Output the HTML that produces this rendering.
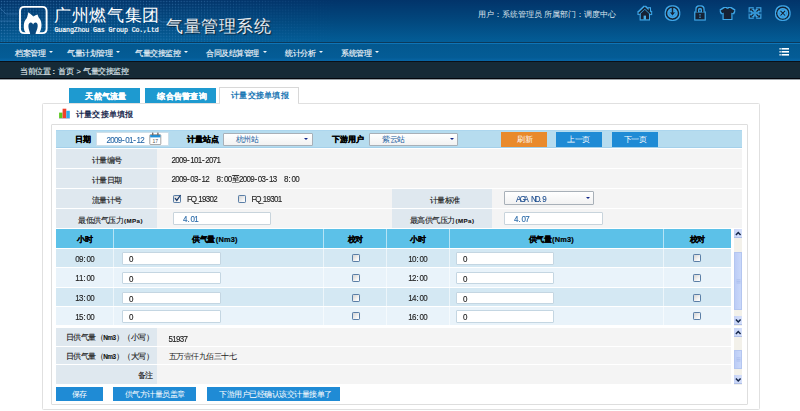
<!DOCTYPE html>
<html><head><meta charset="utf-8">
<style>
*{margin:0;padding:0;box-sizing:border-box}
html,body{width:800px;height:411px;overflow:hidden;background:#fff;font-family:"Liberation Sans",sans-serif}
.a{position:absolute}
#hdr{left:0;top:0;width:800px;height:42px;background:linear-gradient(#02346a,#02487e 50%,#035d97)}
#l1{left:0;top:42px;width:800px;height:1px;background:#0b3a5c}
#l2{left:0;top:43px;width:800px;height:1px;background:#0f74b6}
#nav{left:0;top:44px;width:800px;height:17px;background:linear-gradient(#03588f,#045c96 80%,#0866a6)}
#l3{left:0;top:61px;width:800px;height:1px;background:#0a1018}
#bc{left:0;top:62px;width:800px;height:16px;background:#162a36}
#l4{left:0;top:78px;width:800px;height:1px;background:#03060c}
#l5{left:0;top:79px;width:800px;height:1px;background:#9aa0a4}
.t{white-space:nowrap;line-height:1;letter-spacing:-0.5px}
.dig i{letter-spacing:0}
.bc{top:67.5px;font-size:7.5px;color:#dde4ea;-webkit-text-stroke:0.15px #dde4ea}
.nav{color:#eef3f8;font-size:7.5px;top:50px;-webkit-text-stroke:0.15px #eef3f8}
.car{width:0;height:0;border-left:2.2px solid transparent;border-right:2.2px solid transparent;border-top:2.5px solid #f0f4f8;top:51px}
.tab{-webkit-text-stroke:0.15px #fff;top:88px;height:15px;background:#1e9ad0;color:#fff;font-size:8.2px;font-weight:bold;text-align:center;line-height:1;padding-top:5px;letter-spacing:0.25px;white-space:nowrap;text-indent:3px}
.btn{color:#fff;font-size:7.5px;text-align:center;line-height:15px;height:15px;letter-spacing:-0.5px;white-space:nowrap}
.lbl{background:#dfe8ef}
.val{background:#f4f4f4}
.inp{background:#fff;border:1px solid #c8d4dc;border-radius:1px}
.sel{background:linear-gradient(#fff,#f2f2f2);border:1px solid #a8b0b8;border-radius:1px}
.cb{width:8.4px;height:8.2px;border:1px solid #5a7ea6;background:linear-gradient(135deg,#d4d4d4,#fafafa 80%);border-radius:1.2px}
.num{font-size:6.5px;color:#222}
.dig{font-size:8px;-webkit-text-stroke:0.12px currentColor;transform:scaleY(1.18);transform-origin:0 0}.dig i{display:inline-block;width:3.75px;text-align:center;font-style:normal}.dig .cj{font-weight:normal;font-size:7.5px}
.tc{text-align:center;color:#222}
.cl{font-size:7.5px;color:#111;text-align:center;-webkit-text-stroke:0.1px #222}
.cr{font-size:7.5px;color:#111;text-align:right;-webkit-text-stroke:0.1px #222}
.sm2{font-size:7.4px;font-weight:bold;margin-left:1px;letter-spacing:0.2px}.sm3{font-size:6.4px;font-weight:bold}.sm{font-size:6.2px;font-weight:bold;letter-spacing:0.4px;margin-left:1px}
.th{top:236px;font-size:7.5px;font-weight:bold;color:#000;text-align:center;-webkit-text-stroke:0.18px #000}
.vs{width:1px;height:97px;background:rgba(255,255,255,0.55)}
.hs{left:56px;width:675px;height:0.8px;background:rgba(255,255,255,0.6)}
.ti{height:12.5px;border-color:#c4d6e2}
.arr{width:0;height:0;border-left:2.4px solid transparent;border-right:2.4px solid transparent;border-top:2.6px solid #13288a}
.sbb{width:8.5px;height:9px;background:linear-gradient(90deg,#c6d3f6,#d6e0fa);border-bottom:1px solid #b0c0e8}
.sbt{width:8.5px;background:linear-gradient(90deg,#bccdf6,#cad8fa);border:1px solid #b4c6f0}
</style></head><body>
<div id="hdr" class="a"></div>
<div id="l1" class="a"></div><div id="l2" class="a"></div>
<div id="nav" class="a"></div><div id="l3" class="a"></div>
<div id="bc" class="a"></div><div id="l4" class="a"></div><div id="l5" class="a"></div>


<!-- header decorations -->
<svg class="a" style="left:0;top:0" width="800" height="42">
 <defs>
  <pattern id="dots" width="2.9" height="2.9" patternUnits="userSpaceOnUse"><rect x="0.8" y="0.8" width="1.3" height="1.3" fill="#5a9ad2"/></pattern>
  <linearGradient id="lg" x1="0" y1="0" x2="1" y2="0"><stop offset="0" stop-color="#fff" stop-opacity="0.9"/><stop offset="0.55" stop-color="#fff" stop-opacity="0.7"/><stop offset="1" stop-color="#fff" stop-opacity="0"/></linearGradient>
  <mask id="m"><rect x="0" y="0" width="340" height="42" fill="url(#lg)"/></mask>
  <filter id="glow" x="-30%" y="-30%" width="160%" height="160%"><feMorphology in="SourceAlpha" operator="dilate" radius="0.6" result="d0"/><feGaussianBlur in="d0" stdDeviation="0.45" result="d"/><feFlood flood-color="#40a8ea"/><feComposite in2="d" operator="in" result="g"/><feMerge><feMergeNode in="g"/><feMergeNode in="SourceGraphic"/></feMerge></filter>
 </defs>
 <rect x="0" y="0" width="340" height="42" fill="url(#dots)" opacity="0.55" mask="url(#m)"/>
 <path d="M0 8 L6 14 L18 14 M0 21 L16 21 M150 14 L162 22 L175 22" stroke="#4d8cc4" stroke-width="0.9" fill="none" opacity="0.5"/>
 <!-- logo -->
 <path d="M30.2 33.1 L24.3 33.1 Q20 33.1 20 28.8 L20 11.2 Q20 6.9 24.3 6.9 L42.3 6.9 Q46.6 6.9 46.6 11.2 L46.6 28.8 Q46.6 33.1 42.3 33.1 L35.3 33.1" stroke="#fff" stroke-width="1.9" fill="none"/>
 <path d="M26.5 33.6 C24.4 32 23.6 28.8 23.8 25.5 C23.9 22.5 25 20 26.5 18.5 C27.3 17.5 27.6 15.5 28.4 12.3 C29.8 13.5 31.8 15 33.3 16.6 C34.8 15.6 36.2 15 37.6 14.6 C38 16.5 38.6 17.5 39.5 18.5 C40.8 20 41.6 22.5 41.5 25.6 C41.4 28.8 40.4 31.8 38.8 33.6 Z" fill="#fff"/>
 <path d="M30.3 34.5 C30.1 32 28.4 29.5 28.4 26.2 C28.4 23.6 29.5 22.4 30.8 22.4 C31.9 22.4 32.6 23.2 33.1 24.4 C33.6 23.2 34.4 22.4 35.6 22.4 C36.9 22.4 37.8 23.6 37.7 26.2 C37.6 29.5 35.6 32 35.3 34.5 Z" fill="#0a4a80"/>
 <!-- icons -->
 <circle cx="672.5" cy="13.2" r="5.5" fill="#2a82c4"/><circle cx="782.8" cy="13.2" r="5.5" fill="#2a82c4"/>
 <g filter="url(#glow)" fill="#142436" stroke="#142436">
  <path d="M638.6 13.6 L644.8 7.9 L651 13.6" fill="none" stroke-width="1.9"/>
  <rect x="648.4" y="8.2" width="1.6" height="3.2" stroke="none"/>
  <path d="M640.6 13.4 L644.8 9.6 L649 13.4 L649 19.6 L640.6 19.6 Z" stroke="none"/>
  <circle cx="672.5" cy="13.2" r="6" fill="none" stroke-width="1.8"/>
  <path d="M671.6 7 L673.4 7 L673.4 12.2 L675.4 12.2 L672.5 15.8 L669.6 12.2 L671.6 12.2 Z" stroke="none"/>
  <path d="M697.2 12.6 L697.2 10 A2.8 2.8 0 0 1 702.8 10 L702.8 12.6" fill="none" stroke-width="1.7"/>
  <rect x="695.2" y="12.4" width="9.6" height="7.2" stroke="none"/>
  <path d="M724.5 8 L726 8 Q727.5 9.5 729 8 L730.5 8 L734.5 10.5 L733 13.5 L731.5 12.8 L731.5 19 L723.5 19 L723.5 12.8 L722 13.5 L720.5 10.5 Z" stroke="none"/>
  <g stroke-width="1.5"><path d="M753.6 11.8 L751.4 9.6 M756.4 11.8 L758.6 9.6 M753.6 14.2 L751.4 16.4 M756.4 14.2 L758.6 16.4"/></g>
  <path d="M749.6 8.2 L753.2 8.2 L749.6 11.8 Z M760.4 8.2 L756.8 8.2 L760.4 11.8 Z M749.6 17.8 L753.2 17.8 L749.6 14.2 Z M760.4 17.8 L756.8 17.8 L760.4 14.2 Z" stroke="none"/>
  <circle cx="782.8" cy="13.2" r="6.1" fill="none" stroke-width="1.6"/>
  <path d="M780.4 10.8 L785.2 15.6 M785.2 10.8 L780.4 15.6" stroke-width="1.3"/>
 </g>
 <rect x="643.6" y="15.6" width="2.4" height="4" fill="#47aee8"/>
 <rect x="699.4" y="14.2" width="1.2" height="1.3" fill="#47aee8"/>
 <rect x="699.4" y="16.6" width="1.2" height="1.3" fill="#47aee8"/>
</svg>
<div class="a t" style="left:54px;top:7.5px;font-size:16.8px;letter-spacing:0.7px;color:#fff">广州燃气集团</div>
<div class="a t" style="left:54.5px;top:28.3px;font-size:6.6px;color:#fff;font-family:'Liberation Mono',monospace;letter-spacing:-0.1px;-webkit-text-stroke:0.2px #fff">GuangZhou Gas Group Co.,Ltd</div>
<div class="a t" style="left:166px;top:18px;font-size:16.5px;letter-spacing:0.6px;color:#e8ecf0;text-shadow:1px 1px 1px #123">气量管理系统</div>
<div class="a t" style="left:478px;top:10.5px;font-size:7.8px;letter-spacing:0;color:#dde6ee">用户：系统管理员 所属部门：调度中心</div>
<!-- list icon in nav -->
<svg class="a" style="left:779px;top:47px" width="12" height="10"><g fill="#fff"><rect x="0.5" y="1" width="1.2" height="1.6"/><rect x="0.5" y="4" width="1.2" height="1.6"/><rect x="0.5" y="7" width="1.2" height="1.6"/><rect x="2.5" y="1" width="7.5" height="1.6"/><rect x="2.5" y="4" width="7.5" height="1.6"/><rect x="2.5" y="7" width="7.5" height="1.6"/></g></svg>

<!-- nav items -->
<div class="a t nav" style="left:15px">档案管理</div><div class="a car" style="left:48.5px"></div>
<div class="a t nav" style="left:67px">气量计划管理</div><div class="a car" style="left:115.5px"></div>
<div class="a t nav" style="left:135px">气量交接监控</div><div class="a car" style="left:183.5px"></div>
<div class="a t nav" style="left:206px">合同及结算管理</div><div class="a car" style="left:262.5px"></div>
<div class="a t nav" style="left:285px">统计分析</div><div class="a car" style="left:318.5px"></div>
<div class="a t nav" style="left:341px">系统管理</div><div class="a car" style="left:374.5px"></div>

<!-- breadcrumb -->
<div class="a t bc" style="left:20px">当前位置</div><div class="a t bc" style="left:52.5px;font-weight:bold">:</div><div class="a t bc" style="left:58px">首页</div><div class="a t bc" style="left:76.5px">&gt;</div><div class="a t bc" style="left:83px">气量交接监控</div>

<!-- tabs -->
<div class="a tab" style="left:69px;width:71px">天然气流量</div>
<div class="a tab" style="left:145px;width:71px">综合告警查询</div>
<div class="a" style="left:219px;top:87px;width:80px;height:17px;background:#fff;border:1px solid #d8d8d8;border-bottom:none"></div>
<div class="a t" style="left:220px;top:92px;width:80px;text-align:center;font-size:8.2px;letter-spacing:0.25px;font-weight:bold;color:#1a78b4">计量交接单填报</div>

<!-- panel -->
<div class="a" style="left:41.5px;top:102.5px;width:718px;height:307px;border:1.5px solid #e0e0e0;border-radius:1.5px"></div>
<div class="a" style="left:220px;top:102.3px;width:78px;height:2px;background:#fff"></div>
<div class="a t" style="left:76px;top:110.5px;font-size:7.9px;font-weight:bold;color:#1c2c50;letter-spacing:0.2px">计量交接单填报</div>

<!-- inner box -->
<div class="a" style="left:50.8px;top:124.3px;width:697.2px;height:281px;border:1.3px solid #dedede;border-radius:1px"></div>

<!-- filter row -->
<div class="a" style="left:56px;top:130px;width:686px;height:18px;background:#b6dcef;border-top:1px solid #acd6ee;border-bottom:1px solid #a4d0ea"></div>

<!-- bar icon -->
<svg class="a" style="left:58px;top:108px" width="13" height="12">
 <rect x="1.1" y="4.6" width="3.4" height="5.6" fill="#5cc81e"/>
 <rect x="4.6" y="0.7" width="3.7" height="9.5" fill="#f0402c"/>
 <rect x="8.3" y="2.8" width="3.5" height="7.4" fill="#2ea8ec"/>
 <rect x="1.1" y="10.2" width="10.7" height="0.6" fill="#b0a0c8"/>
</svg>

<!-- filter row content -->
<div class="a t" style="left:75px;top:136px;font-size:7.5px;font-weight:bold;color:#000;-webkit-text-stroke:0.25px #000">日期</div>
<div class="a inp" style="left:96px;top:132px;width:73px;height:14px;border-color:#cfdfe9"></div>
<div class="a t dig" style="left:106.5px;top:136px;color:#2a6aa8"><i>2</i><i>0</i><i>0</i><i>9</i><i>-</i><i>0</i><i>1</i><i>-</i><i>1</i><i>2</i></div>
<svg class="a" style="left:149px;top:132px" width="13" height="13">
 <rect x="0.8" y="2.6" width="11" height="10" rx="0.8" fill="#fff" stroke="#8a8a8a" stroke-width="0.8"/>
 <rect x="1.2" y="3" width="10.2" height="2.4" fill="#2090d8"/>
 <rect x="3" y="0.6" width="1.4" height="3" rx="0.5" fill="#707070"/>
 <rect x="8.2" y="0.6" width="1.4" height="3" rx="0.5" fill="#707070"/>
 <text x="6.3" y="11" font-size="5" text-anchor="middle" fill="#555" font-family="Liberation Sans">17</text>
</svg>
<div class="a t" style="left:186.5px;top:136px;font-size:7.5px;font-weight:bold;color:#000;letter-spacing:0;-webkit-text-stroke:0.25px #000">计量站点</div>
<div class="a sel" style="left:223px;top:132.5px;width:90px;height:13px"></div>
<div class="a t" style="left:235.5px;top:135.5px;font-size:7.5px;color:#23609f">杭州站</div>
<div class="a arr" style="left:304px;top:138px"></div>
<div class="a t" style="left:331.5px;top:136px;font-size:7.5px;font-weight:bold;color:#000;letter-spacing:0;-webkit-text-stroke:0.25px #000">下游用户</div>
<div class="a sel" style="left:368.5px;top:132.5px;width:89px;height:13px"></div>
<div class="a t" style="left:382px;top:135.5px;font-size:7.5px;color:#23609f">紫云站</div>
<div class="a arr" style="left:449.5px;top:138px"></div>
<div class="a btn" style="left:501px;top:131.5px;width:46px;background:#e98a2c;text-indent:1.5px">刷新</div>
<div class="a btn" style="left:555.5px;top:131.5px;width:46px;background:#1f8bd5">上一页</div>
<div class="a btn" style="left:612px;top:131.5px;width:46px;background:#1f8bd5">下一页</div>

<!-- info rows -->
<div class="a lbl" style="left:56px;top:149px;width:101px;height:18.5px"></div>
<div class="a val" style="left:157px;top:149px;width:585px;height:18.5px"></div>
<div class="a lbl" style="left:56px;top:169px;width:101px;height:18.5px"></div>
<div class="a val" style="left:157px;top:169px;width:585px;height:18.5px"></div>
<div class="a lbl" style="left:56px;top:188.8px;width:101px;height:18.8px"></div>
<div class="a val" style="left:157px;top:188.8px;width:235px;height:18.8px"></div>
<div class="a lbl" style="left:392px;top:188.8px;width:100px;height:18.8px"></div>
<div class="a val" style="left:492px;top:188.8px;width:250px;height:18.8px"></div>
<div class="a lbl" style="left:56px;top:209px;width:101px;height:18.8px"></div>
<div class="a val" style="left:157px;top:209px;width:235px;height:18.8px"></div>
<div class="a lbl" style="left:392px;top:209px;width:100px;height:18.8px"></div>
<div class="a val" style="left:492px;top:209px;width:250px;height:18.8px"></div>

<div class="a t cl" style="left:56px;top:157px;width:101px">计量编号</div>
<div class="a t cl" style="left:56px;top:177px;width:101px">计量日期</div>
<div class="a t cl" style="left:56px;top:197px;width:101px">流量计号</div>
<div class="a t cl" style="left:60px;top:217px;width:101px">最低供气压力<span class="sm">(MPa)</span></div>
<div class="a t cl" style="left:394.5px;top:196.5px;width:100px">计量标准</div>
<div class="a t cl" style="left:392px;top:217px;width:100px">最高供气压力<span class="sm">(MPa)</span></div>

<div class="a t dig" style="left:171.5px;top:155.8px;color:#222"><i>2</i><i>0</i><i>0</i><i>9</i><i>-</i><i>1</i><i>0</i><i>1</i><i>-</i><i>2</i><i>0</i><i>7</i><i>1</i></div>
<div class="a t dig" style="left:171.5px;top:174.6px;color:#222"><i>2</i><i>0</i><i>0</i><i>9</i><i>-</i><i>0</i><i>3</i><i>-</i><i>1</i><i>2</i><i>&nbsp;</i><i>&nbsp;</i><i>8</i><i>:</i><i>0</i><i>0</i><b class="cj">至</b><i>2</i><i>0</i><i>0</i><i>9</i><i>-</i><i>0</i><i>3</i><i>-</i><i>1</i><i>3</i><i>&nbsp;</i><i>&nbsp;</i><i>8</i><i>:</i><i>0</i><i>0</i></div>
<div class="a cb chk" style="left:172.5px;top:194.5px"></div>
<svg class="a" style="left:172.5px;top:193px" width="9" height="10"><path d="M2 5.2 L3.8 7.4 L7.6 2" stroke="#1a3a6a" stroke-width="1.3" fill="none"/></svg>
<div class="a t dig" style="left:187px;top:195px;color:#222"><i>F</i><i>Q</i><i>_</i><i>1</i><i>9</i><i>3</i><i>0</i><i>2</i></div>
<div class="a cb" style="left:237.5px;top:194.5px"></div>
<div class="a t dig" style="left:251.5px;top:195px;color:#222"><i>F</i><i>Q</i><i>_</i><i>1</i><i>9</i><i>3</i><i>0</i><i>1</i></div>
<div class="a sel" style="left:504px;top:191px;width:89.5px;height:13.5px"></div>
<div class="a t dig" style="left:516px;top:194.8px;color:#1f4f90"><i>A</i><i>G</i><i>A</i><i>&nbsp;</i><i>N</i><i>D</i><i>.</i><i>9</i></div>
<div class="a arr" style="left:585.5px;top:197px"></div>
<div class="a inp" style="left:172.5px;top:211.5px;width:98.5px;height:13px"></div>
<div class="a t dig" style="left:183px;top:214.6px;color:#2a6aa8"><i>4</i><i>.</i><i>0</i><i>1</i></div>
<div class="a inp" style="left:503.5px;top:211.5px;width:99px;height:13px"></div>
<div class="a t dig" style="left:514px;top:214.6px;color:#2a6aa8"><i>4</i><i>.</i><i>0</i><i>7</i></div>

<!-- hourly table -->
<div class="a" style="left:56px;top:229px;width:675px;height:18.5px;background:#5cc1e8"></div>
<div class="a" style="left:56px;top:248.5px;width:675px;height:18.8px;background:#d4e8f3"></div>
<div class="a" style="left:56px;top:268px;width:675px;height:19px;background:#e9f3fa"></div>
<div class="a" style="left:56px;top:288px;width:675px;height:18px;background:#d4e8f3"></div>
<div class="a" style="left:56px;top:306.5px;width:675px;height:18.8px;background:#e9f3fa"></div>
<div class="a vs" style="left:112.5px;top:229px"></div>
<div class="a vs" style="left:323px;top:229px"></div>
<div class="a vs" style="left:386px;top:229px"></div>
<div class="a vs" style="left:448.5px;top:229px"></div>
<div class="a vs" style="left:663px;top:229px"></div>
<div class="a hs" style="top:247.7px"></div>
<div class="a hs" style="top:267.3px"></div>
<div class="a hs" style="top:287.2px"></div>
<div class="a hs" style="top:306px"></div>

<div class="a t th" style="left:56px;width:57px">小时</div>
<div class="a t th" style="left:110px;width:210px">供气量<span class="sm2">(Nm3)</span></div>
<div class="a t th" style="left:323.5px;width:63px">校对</div>
<div class="a t th" style="left:386.5px;width:62px">小时</div>
<div class="a t th" style="left:444px;width:214.5px">供气量<span class="sm2">(Nm3)</span></div>
<div class="a t th" style="left:663.5px;width:67.5px">校对</div>

<div class="a t dig tc" style="left:56px;width:57px;top:254.5px"><i>0</i><i>9</i><i>:</i><i>0</i><i>0</i></div>
<div class="a inp ti" style="left:122px;top:252.0px;width:98.5px"></div><div class="a t dig" style="left:129px;top:255.0px;color:#222"><i>0</i></div>
<div class="a cb" style="left:351.5px;top:254.0px"></div>
<div class="a t dig tc" style="left:386.5px;width:62px;top:254.5px"><i>1</i><i>0</i><i>:</i><i>0</i><i>0</i></div>
<div class="a inp ti" style="left:456px;top:252.0px;width:97.5px"></div><div class="a t dig" style="left:463px;top:255.0px;color:#222"><i>0</i></div>
<div class="a cb" style="left:692.5px;top:254.0px"></div>
<div class="a t dig tc" style="left:56px;width:57px;top:274px"><i>1</i><i>1</i><i>:</i><i>0</i><i>0</i></div>
<div class="a inp ti" style="left:122px;top:271.5px;width:98.5px"></div><div class="a t dig" style="left:129px;top:274.5px;color:#222"><i>0</i></div>
<div class="a cb" style="left:351.5px;top:273.5px"></div>
<div class="a t dig tc" style="left:386.5px;width:62px;top:274px"><i>1</i><i>2</i><i>:</i><i>0</i><i>0</i></div>
<div class="a inp ti" style="left:456px;top:271.5px;width:97.5px"></div><div class="a t dig" style="left:463px;top:274.5px;color:#222"><i>0</i></div>
<div class="a cb" style="left:692.5px;top:273.5px"></div>
<div class="a t dig tc" style="left:56px;width:57px;top:294px"><i>1</i><i>3</i><i>:</i><i>0</i><i>0</i></div>
<div class="a inp ti" style="left:122px;top:291.5px;width:98.5px"></div><div class="a t dig" style="left:129px;top:294.5px;color:#222"><i>0</i></div>
<div class="a cb" style="left:351.5px;top:293.5px"></div>
<div class="a t dig tc" style="left:386.5px;width:62px;top:294px"><i>1</i><i>4</i><i>:</i><i>0</i><i>0</i></div>
<div class="a inp ti" style="left:456px;top:291.5px;width:97.5px"></div><div class="a t dig" style="left:463px;top:294.5px;color:#222"><i>0</i></div>
<div class="a cb" style="left:692.5px;top:293.5px"></div>
<div class="a t dig tc" style="left:56px;width:57px;top:312.5px"><i>1</i><i>5</i><i>:</i><i>0</i><i>0</i></div>
<div class="a inp ti" style="left:122px;top:310.0px;width:98.5px"></div><div class="a t dig" style="left:129px;top:313.0px;color:#222"><i>0</i></div>
<div class="a cb" style="left:351.5px;top:312.0px"></div>
<div class="a t dig tc" style="left:386.5px;width:62px;top:312.5px"><i>1</i><i>6</i><i>:</i><i>0</i><i>0</i></div>
<div class="a inp ti" style="left:456px;top:310.0px;width:97.5px"></div><div class="a t dig" style="left:463px;top:313.0px;color:#222"><i>0</i></div>
<div class="a cb" style="left:692.5px;top:312.0px"></div>


<!-- scrollbars -->
<div class="a" style="left:733.5px;top:229px;width:8.5px;height:97px;background:#f3f1ea"></div>
<div class="a sbb" style="left:733.5px;top:229px"><svg width="8.5" height="9" style="display:block"><path d="M1.9 6 L4.25 3.6 L6.6 6" stroke="#14264a" stroke-width="1.5" fill="none"/></svg></div>
<div class="a sbt" style="left:733.5px;top:252px;height:57.5px"></div>
<div class="a sbb" style="left:733.5px;top:316px"><svg width="8.5" height="9" style="display:block"><path d="M1.9 3.6 L4.25 6 L6.6 3.6" stroke="#14264a" stroke-width="1.5" fill="none"/></svg></div>
<div class="a" style="left:733.5px;top:328px;width:8.5px;height:56.5px;background:#f3f1ea"></div>
<div class="a sbb" style="left:733.5px;top:328px"><svg width="8.5" height="9" style="display:block"><path d="M1.9 6 L4.25 3.6 L6.6 6" stroke="#14264a" stroke-width="1.5" fill="none"/></svg></div>
<div class="a sbt" style="left:733.5px;top:350px;height:18.6px"></div>
<div class="a sbb" style="left:733.5px;top:375px"><svg width="8.5" height="9" style="display:block"><path d="M1.9 3.6 L4.25 6 L6.6 3.6" stroke="#14264a" stroke-width="1.5" fill="none"/></svg></div>


<svg class="a" style="left:735.5px;top:278.5px" width="5" height="5"><g stroke="#9fb4e8" stroke-width="0.6"><path d="M0.5 0.8 H4.5 M0.5 2.4 H4.5 M0.5 4 H4.5"/></g></svg>
<svg class="a" style="left:735.5px;top:357px" width="5" height="5"><g stroke="#9fb4e8" stroke-width="0.6"><path d="M0.5 0.8 H4.5 M0.5 2.4 H4.5 M0.5 4 H4.5"/></g></svg>
<!-- bottom rows -->
<div class="a lbl" style="left:56px;top:328px;width:101px;height:17.8px"></div>
<div class="a val" style="left:157px;top:328px;width:574px;height:17.8px"></div>
<div class="a lbl" style="left:56px;top:347px;width:101px;height:17px"></div>
<div class="a val" style="left:157px;top:347px;width:574px;height:17px"></div>
<div class="a lbl" style="left:56px;top:365.3px;width:101px;height:18.5px"></div>
<div class="a val" style="left:157px;top:365.3px;width:574px;height:18.5px"></div>
<div class="a t cr" style="left:56px;top:333.5px;width:97px">日供气量（<span class="sm3">Nm3</span>）（小写）</div>
<div class="a t cr" style="left:56px;top:352.5px;width:97px">日供气量（<span class="sm3">Nm3</span>）（大写）</div>
<div class="a t cr" style="left:56px;top:372px;width:96.5px">备注</div>
<div class="a t dig" style="left:168.5px;top:335px;color:#222"><i>5</i><i>1</i><i>9</i><i>3</i><i>7</i></div>
<div class="a t" style="left:168.5px;top:353px;font-size:7.5px;color:#222">五万壹仟九佰三十七</div>

<div class="a btn" style="left:56px;top:387px;width:46.5px;height:14.3px;line-height:16px;background:#1f8bd5">保存</div>
<div class="a btn" style="left:113px;top:387px;width:83.3px;height:14.3px;line-height:16px;background:#1f8bd5">供气方计量员盖章</div>
<div class="a btn" style="left:207px;top:387px;width:132.6px;height:14.3px;line-height:16px;background:#1f8bd5;text-indent:4px">下游用户已经确认该交计量接单了</div>
</body></html>
